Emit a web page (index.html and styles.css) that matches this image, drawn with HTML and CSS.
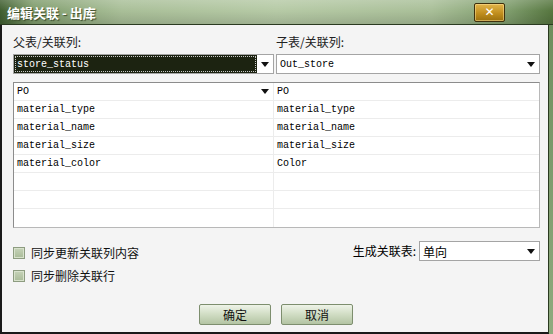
FILE: index.html
```html
<!DOCTYPE html>
<html lang="zh-CN">

<head>
    <meta charset="UTF-8">
    <title>编辑关联 - 出库</title>
    <link rel="stylesheet" href="styles.css">
</head>

<body>
    <div class="window">
        <div class="titlebar">
            <span class="title">编辑关联 - 出库</span>
            <span class="close">&#x2715;</span>
        </div>
        <div class="frame">
            <div class="content">
                <div class="pickers">
                    <div class="picker">
                        <label class="label">父表/关联列:</label>
                        <div class="select focus">
                            <span class="value"><span class="ring">store_status</span></span>
                            <span class="arrow"></span>
                        </div>
                    </div>
                    <div class="picker">
                        <label class="label">子表/关联列:</label>
                        <div class="select">
                            <span class="value">Out_store</span>
                            <span class="arrow"></span>
                        </div>
                    </div>
                </div>

                <!-- 关联列映射表 -->
                <div class="grid">
                    <div class="row head">
                        <div class="cell left">PO<span class="arrow"></span></div>
                        <div class="cell">PO</div>
                    </div>
                    <div class="row">
                        <div class="cell left">material_type</div>
                        <div class="cell">material_type</div>
                    </div>
                    <div class="row">
                        <div class="cell left">material_name</div>
                        <div class="cell">material_name</div>
                    </div>
                    <div class="row">
                        <div class="cell left">material_size</div>
                        <div class="cell">material_size</div>
                    </div>
                    <div class="row">
                        <div class="cell left">material_color</div>
                        <div class="cell">Color</div>
                    </div>
                    <div class="row">
                        <div class="cell left"></div>
                        <div class="cell"></div>
                    </div>
                    <div class="row">
                        <div class="cell left"></div>
                        <div class="cell"></div>
                    </div>
                    <div class="row">
                        <div class="cell left"></div>
                        <div class="cell"></div>
                    </div>
                </div>

                <div class="options">
                    <div class="checks">
                        <div class="check"><span class="box"></span>同步更新关联列内容</div>
                        <div class="check"><span class="box"></span>同步删除关联行</div>
                    </div>
                    <div class="mode">
                        <span class="mode-label">生成关联表:</span>
                        <div class="select small">
                            <span class="value cjk">单向</span>
                            <span class="arrow"></span>
                        </div>
                    </div>
                </div>

                <div class="buttons">
                    <button class="btn">确定</button>
                    <button class="btn">取消</button>
                </div>
            </div>
        </div>
    </div>
</body>

</html>
```

FILE: styles.css
```css
* {
    margin: 0;
    padding: 0;
    box-sizing: border-box;
}

body {
    width: 553px;
    height: 334px;
    overflow: hidden;
    font-family: "Noto Sans CJK SC", "Noto Sans", sans-serif;
    font-size: 12px;
    color: #000;
}

.window {
    width: 553px;
    height: 334px;
    display: flex;
    flex-direction: column;
}

/* 标题栏 */
.titlebar {
    height: 25px;
    flex: none;
    display: flex;
    align-items: center;
    justify-content: space-between;
    padding: 0 48px 0 7px;
    background:
        linear-gradient(to bottom, rgba(255, 255, 255, 0.18), rgba(255, 255, 255, 0) 45%, rgba(0, 0, 0, 0.12)),
        linear-gradient(to right, #3f5e30 0%, #7f9c6c 6%, #a9bf98 22%, #b6caa6 50%, #a9bf98 78%, #7f9d6d 92%, #56763f 100%);
    border-bottom: 1px solid #2a3a20;
}

.title {
    color: #fff;
    font-weight: bold;
    font-size: 13px;
    text-shadow: 1px 1px 1px #3a4a2a;
}

.close {
    width: 31px;
    height: 19px;
    display: flex;
    align-items: center;
    justify-content: center;
    color: #fff;
    font-size: 12px;
    font-weight: bold;
    font-family: "DejaVu Sans", sans-serif;
    border: 1px solid #3e300c;
    border-radius: 2px;
    background: linear-gradient(to bottom, #e2b54a, #c08e1e 55%, #9a700e);
    box-shadow: inset 0 0 0 1px rgba(255, 230, 160, 0.5);
}

.frame {
    flex: 1;
    display: flex;
    padding-right: 4px;
    background: linear-gradient(to bottom, #6e8e5e, #8faa7e);
}

.content {
    flex: 1;
    background: #f4f4f4;
    border-left: 2px solid #1a1a1a;
    border-right: 1px solid #2a3a20;
    border-bottom: 2px solid #1a1a1a;
    padding: 9px 7px 0 11px;
}

/* 父表 / 子表 选择 */
.pickers {
    display: grid;
    grid-template-columns: 261px 264px;
    column-gap: 2px;
}

.label {
    display: block;
    height: 20px;
    line-height: 16px;
    color: #222;
}

.select {
    height: 20px;
    display: flex;
    border: 1px solid #a4a4a4;
    background: #fff;
    font-family: "Liberation Mono", monospace;
    font-size: 10px;
}

.select .value {
    flex: 1;
    display: flex;
    align-items: center;
    padding-left: 3px;
}

.select.focus .value {
    background: #1c2311;
    color: #fff;
    padding: 1px;
}

.select.focus .ring {
    flex: 1;
    height: 100%;
    display: flex;
    align-items: center;
    padding-left: 2px;
    outline: 1px dotted #c8c8c8;
    outline-offset: -1px;
}

.select .arrow,
.cell .arrow {
    width: 16px;
    flex: none;
    background: #fff;
    position: relative;
}

.arrow::after {
    content: "";
    position: absolute;
    left: 4px;
    top: 7px;
    border-left: 4px solid transparent;
    border-right: 4px solid transparent;
    border-top: 5px solid #111;
}

/* 映射表 */
.grid {
    margin-top: 8px;
    width: 527px;
    border: 1px solid #b8b8b8;
    border-top-color: #8c8c8c;
    border-left-color: #8c8c8c;
    background: #fff;
    font-family: "Liberation Mono", monospace;
    font-size: 10px;
}

.row {
    display: grid;
    grid-template-columns: 260px 1fr;
    height: 18px;
    border-bottom: 1px solid #ececec;
}

.row:last-child {
    border-bottom: none;
}

.cell {
    display: flex;
    align-items: center;
    padding-left: 3px;
}

.cell.left {
    border-right: 1px solid #ececec;
}

.cell .arrow {
    margin-left: auto;
    align-self: stretch;
    background: transparent;
}

.cell .arrow::after {
    top: 6px;
}

/* 选项 */
.options {
    margin-top: 13px;
    display: flex;
    justify-content: space-between;
}

.checks {
    padding-top: 3px;
    display: flex;
    flex-direction: column;
    gap: 6px;
}

.check {
    display: flex;
    align-items: center;
    gap: 6px;
    height: 17px;
    color: #111;
}

.box {
    width: 12px;
    height: 12px;
    border: 1px solid #8d9c80;
    background: linear-gradient(to bottom, #c6d3b8, #a9bb98);
    box-shadow: inset 0 0 0 1px #d8e2cc;
}

.mode {
    display: flex;
    align-items: flex-start;
    gap: 3px;
    margin-right: 1px;
}

.mode-label {
    line-height: 20px;
}

.select.small {
    width: 121px;
}

.select .cjk {
    font-family: "Noto Sans CJK SC", sans-serif;
    font-size: 12px;
}

/* 按钮 */
.buttons {
    margin-top: 20px;
    display: flex;
    justify-content: center;
    gap: 10px;
    padding-right: 2px;
}

.btn {
    width: 72px;
    height: 21px;
    font-family: "Noto Sans CJK SC", sans-serif;
    font-size: 12px;
    color: #111;
    border: 1px solid #7d8e6e;
    border-radius: 2px;
    background: linear-gradient(to bottom, #eef3e8, #d3dfc7 45%, #b3c4a3);
}
```
